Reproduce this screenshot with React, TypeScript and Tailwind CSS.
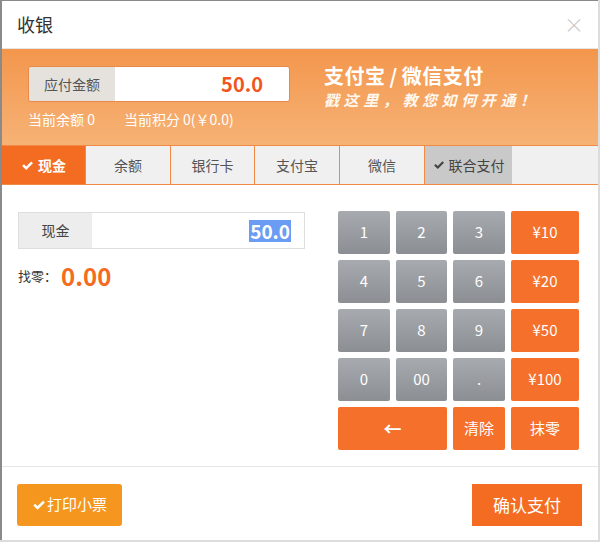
import React from "react";

const font = { fontFamily: '"Noto Sans CJK SC", "Noto Sans", sans-serif' };

function Check({ className = "" }: { className?: string }) {
  return (
    <svg viewBox="0 0 16 16" className={className} fill="currentColor">
      <path d="M1.5 8.6 L3.6 6.5 L6.4 9.2 L12.6 3 L14.7 5.1 L6.4 13.4 Z" />
    </svg>
  );
}

function Key({ children, orange = false, className = "" }: { children: React.ReactNode; orange?: boolean; className?: string }) {
  return (
    <div
      className={
        "flex items-center justify-center rounded-[2px] text-[15px] text-white h-[43px] " +
        (orange ? "bg-[#f5702a] " : "bg-gradient-to-b from-[#a7abaf] to-[#8b8f93] ") +
        className
      }
    >
      {children}
    </div>
  );
}

export default function App() {
  const tabs: [string, string][] = [
    ["余额", "w-[85px]"],
    ["银行卡", "w-[84px]"],
    ["支付宝", "w-[85px]"],
    ["微信", "w-[85px]"],
  ];
  return (
    <div className="w-[600px] h-[542px] bg-[#dcdcdc]" style={font}>
      <div className="w-[598px] h-[540px] bg-white border-l-2 border-t border-[#8a8a8a] flex flex-col">
        {/* header */}
        <div className="h-[48px] flex items-center justify-between pl-[15px] pr-[14px] border-b border-[#e6e6e6] shrink-0">
          <span className="text-[18px] text-[#333]">收银</span>
          <span className="text-[20px] text-[#c4c4c4] leading-none font-light">×</span>
        </div>
        {/* banner */}
        <div className="h-[96px] shrink-0 bg-gradient-to-b from-[#f3964c] to-[#f6b275] flex pl-[26px] pt-[17px]">
          <div className="w-[262px]">
            <div className="flex h-[36px] w-[262px] rounded-[3px] overflow-hidden border border-[#e98a4a]">
              <div className="w-[86px] bg-[#e5e2de] text-[#555] text-[14px] flex items-center justify-center">应付金额</div>
              <div className="flex-1 bg-white flex items-center justify-end pr-[26px] text-[20px] font-bold text-[#f0561e]">50.0</div>
            </div>
            <div className="flex gap-[29px] mt-[7px] text-[14px] text-white whitespace-nowrap">
              <span>当前余额 0</span>
              <span>当前积分 0(￥0.0)</span>
            </div>
          </div>
          <div className="ml-[34px] text-white -mt-[3px]">
            <div className="text-[20px] font-bold leading-[26px] tracking-[0.5px] whitespace-nowrap">
              支付宝<span className="mx-[4px]">/</span>微信支付
            </div>
            <div className="text-[15px] font-bold italic tracking-[4.6px] leading-[22px] text-[#fff8f0] whitespace-nowrap">戳这里，教您如何开通！</div>
          </div>
        </div>
        {/* tabs */}
        <div className="h-[40px] shrink-0 flex bg-[#f0f0f0] border-t border-b border-[#f08a44] text-[14px] text-[#555]">
          <div className="w-[83px] bg-[#f36c21] text-white font-bold flex items-center justify-center gap-[4px]">
            <Check className="w-[13px] h-[13px]" />
            现金
          </div>
          {tabs.map(([t, w]) => (
            <div key={t} className={w + " border-l border-[#f08a44] flex items-center justify-center"}>
              {t}
            </div>
          ))}
          <div className="w-[88px] border-l border-[#f08a44] bg-[#c9c9c9] flex items-center justify-center gap-[4px] text-[#444]">
            <Check className="w-[12px] h-[12px]" />
            联合支付
          </div>
        </div>
        {/* content */}
        <div className="flex-1 flex border-b border-[#e6e6e6]">
          <div className="w-[318px] pl-[16px] pt-[27px]">
            <div className="flex h-[37px] w-[287px] border border-[#dedede]">
              <div className="w-[73px] bg-[#ededed] text-[14px] text-[#444] flex items-center justify-center">现金</div>
              <div className="flex-1 bg-white flex items-center justify-end pr-[13px]">
                <span className="bg-[#6a9cf4] text-white text-[19px] font-bold leading-[22px] px-[1px]">50.0</span>
              </div>
            </div>
            <div className="flex items-center mt-[12px]">
              <span className="text-[13px] text-[#333]">找零：</span>
              <span className="ml-[4px] text-[24px] font-bold text-[#f36c21] leading-[30px]">0.00</span>
            </div>
          </div>
          <div className="pl-[18px] pt-[26px]">
            <div className="grid grid-cols-[52px_51px_52px_68px] gap-x-[6px] gap-y-[6px]">
              <Key>1</Key>
              <Key>2</Key>
              <Key>3</Key>
              <Key orange>¥10</Key>
              <Key>4</Key>
              <Key>5</Key>
              <Key>6</Key>
              <Key orange>¥20</Key>
              <Key>7</Key>
              <Key>8</Key>
              <Key>9</Key>
              <Key orange>¥50</Key>
              <Key>0</Key>
              <Key>00</Key>
              <Key>.</Key>
              <Key orange>¥100</Key>
              <Key orange className="col-span-2 text-[18px] font-bold">←</Key>
              <Key orange>清除</Key>
              <Key orange>抹零</Key>
            </div>
          </div>
        </div>
        {/* footer */}
        <div className="h-[73px] shrink-0 flex items-center justify-between pl-[15px] pr-[16px] pt-[2px]">
          <div className="w-[105px] h-[42px] rounded-[3px] bg-[#f5961f] text-white text-[15px] flex items-center justify-center gap-[1px]">
            <Check className="w-[14px] h-[14px]" />
            打印小票
          </div>
          <div className="w-[110px] h-[42px] bg-[#f36c21] text-white text-[17px] flex items-center justify-center">
            确认支付
          </div>
        </div>
      </div>
    </div>
  );
}
